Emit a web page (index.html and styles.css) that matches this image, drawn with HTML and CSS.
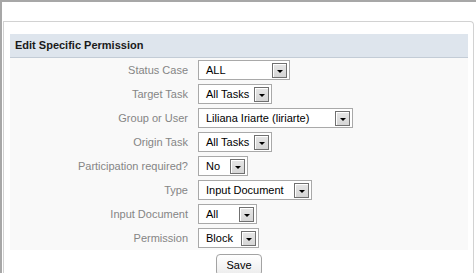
FILE: index.html
```html
<!DOCTYPE html>
<html lang="en">
<head>
  <meta charset="UTF-8" />
  <title>Edit Specific Permission</title>
  <link rel="stylesheet" href="styles.css">
</head>
<body>
  <div class="window">
    <div class="panel">
      <div class="panel-title">Edit Specific Permission</div>

      <div class="form">
        <label class="label">Status Case</label>
        <div class="select w-92"><span class="value">ALL</span><span class="arrow"></span></div>

        <label class="label">Target Task</label>
        <div class="select w-74"><span class="value">All Tasks</span><span class="arrow"></span></div>

        <label class="label">Group or User</label>
        <div class="select w-155"><span class="value">Liliana Iriarte (liriarte)</span><span class="arrow"></span></div>

        <label class="label">Origin Task</label>
        <div class="select w-74"><span class="value">All Tasks</span><span class="arrow"></span></div>

        <label class="label">Participation required?</label>
        <div class="select w-50"><span class="value">No</span><span class="arrow"></span></div>

        <label class="label">Type</label>
        <div class="select w-114"><span class="value">Input Document</span><span class="arrow"></span></div>

        <label class="label">Input Document</label>
        <div class="select w-59"><span class="value">All</span><span class="arrow"></span></div>

        <label class="label">Permission</label>
        <div class="select w-61"><span class="value">Block</span><span class="arrow"></span></div>
      </div>

      <div class="actions">
        <button class="button">Save</button>
      </div>
    </div>
  </div>
</body>
</html>
```

FILE: styles.css
```css
body {
  margin: 0;
  background: #fff;
  font-family: 'Liberation Sans', Arial, sans-serif;
  font-size: 11px;
  color: #000;
}
.window {
  box-sizing: border-box;
  height: 273px;
  border-top: 2px solid #a7a7a7;
  border-left: 2px solid #a7a7a7;
  padding: 19px 2px 0 1px;
  overflow: hidden;
}
.panel {
  box-sizing: border-box;
  height: 252px;
  border: 1px solid #d2d2d2;
  border-bottom: none;
  border-top-right-radius: 4px;
  padding: 12px 5px 0 6px;
}
.panel-title {
  height: 23px;
  line-height: 23px;
  padding-left: 5px;
  background: #dee5ed;
  border-bottom: 1px solid #c3ccd6;
  font-weight: bold;
  color: #1a1a1a;
}
.form {
  display: grid;
  grid-template-columns: 188px 1fr;
  grid-auto-rows: 24px;
  align-items: center;
  background: #f9f9f9;
}
.label {
  text-align: right;
  padding-right: 10px;
  color: #858585;
}
.select {
  box-sizing: border-box;
  height: 20px;
  display: flex;
  align-items: center;
  justify-content: space-between;
  background: #fff;
  border: 1px solid #a9a9a9;
  padding: 0 2px 0 7px;
  white-space: nowrap;
}
.arrow {
  box-sizing: border-box;
  position: relative;
  width: 15px;
  height: 15px;
  border: 1px solid #707070;
  box-shadow: inset 1px 1px 0 #fff;
  background: linear-gradient(#e6e6e6, #d6d6d6);
}
.arrow::after {
  content: '';
  position: absolute;
  left: 4px;
  top: 6px;
  border-left: 3px solid transparent;
  border-right: 3px solid transparent;
  border-top: 3px solid #000;
}
.w-92 { width: 92px; }
.w-74 { width: 74px; }
.w-155 { width: 155px; }
.w-50 { width: 50px; }
.w-114 { width: 114px; }
.w-59 { width: 59px; }
.w-61 { width: 61px; }
.actions {
  display: flex;
  justify-content: center;
  padding-top: 4px;
}
.button {
  width: 46px;
  height: 22px;
  padding: 0;
  border: 1px solid #a3a3a3;
  border-radius: 4px;
  background: linear-gradient(#fff, #ececec);
  font-family: 'Liberation Sans', Arial, sans-serif;
  font-size: 11px;
  color: #000;
}
```
